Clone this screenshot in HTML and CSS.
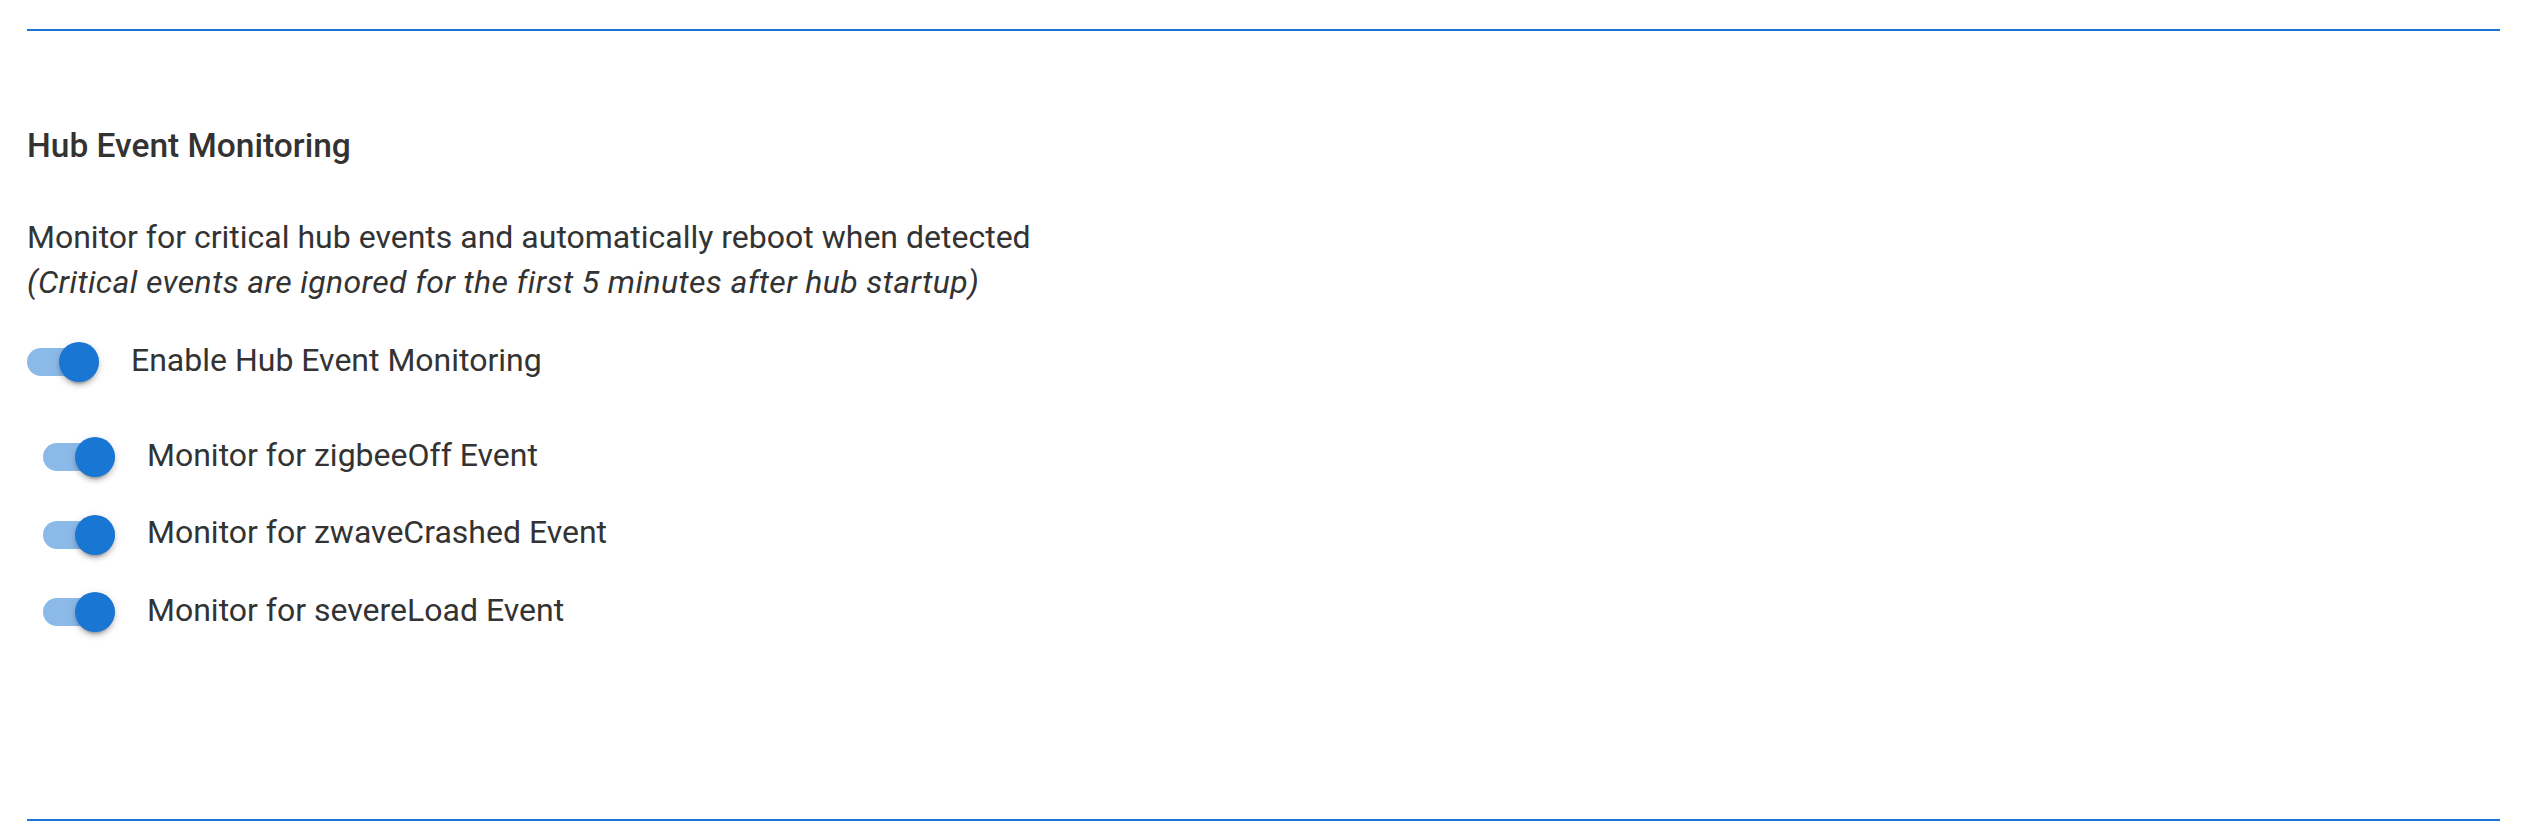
FILE: index.html
```html
<!DOCTYPE html>
<html lang="en">
<head>
<meta charset="utf-8">
<title>Hub Event Monitoring</title>
<link rel="stylesheet" href="styles.css">
</head>
<body>
<div class="page">
  <hr class="rule">
  <section class="section">
    <h3 class="title">Hub Event Monitoring</h3>
    <p class="desc">Monitor for critical hub events and automatically reboot when detected<br><em>(Critical events are ignored for the first 5 minutes after hub startup)</em></p>
    <label class="switch main"><input type="checkbox" checked><span class="lever"></span><span class="text">Enable Hub Event Monitoring</span></label>
    <div class="sub">
      <label class="switch"><input type="checkbox" checked><span class="lever"></span><span class="text">Monitor for zigbeeOff Event</span></label>
      <label class="switch"><input type="checkbox" checked><span class="lever"></span><span class="text">Monitor for zwaveCrashed Event</span></label>
      <label class="switch"><input type="checkbox" checked><span class="lever"></span><span class="text">Monitor for severeLoad Event</span></label>
    </div>
  </section>
  <hr class="rule">
</div>
</body>
</html>
```
FILE: styles.css
```css
html, body {
  margin: 0;
  padding: 0;
  background: #ffffff;
}

body {
  font-family: Roboto, "Noto Sans", "Liberation Sans", sans-serif;
  color: #333333;
}

.page {
  padding: 29px 30px 0 27px;
}

.rule {
  margin: 0;
  border: 0;
  height: 2px;
  background: #1976d2;
}

.section {
  padding-bottom: 189px;
}

.title {
  margin: 89px 0 0;
  font-size: 33.5px;
  font-weight: 500;
  line-height: 51px;
}

.desc {
  margin: 44px 0 0;
  font-size: 32px;
  line-height: 44.8px;
}

.desc em {
  font-style: italic;
  letter-spacing: 0.38px;
}

.switch {
  display: block;
  font-size: 32px;
  line-height: 40px;
  cursor: pointer;
  user-select: none;
}

.switch input {
  display: none;
}

.switch.main {
  margin-top: 35px;
}

.sub {
  margin-top: 55px;
  padding-left: 16px;
  display: flex;
  flex-direction: column;
  gap: 37.5px;
}

.lever {
  position: relative;
  display: inline-block;
  vertical-align: middle;
  width: 72px;
  height: 28px;
  margin-right: 32px;
  border-radius: 30px;
  background: rgba(25, 118, 210, 0.5);
}

.lever::after {
  content: "";
  position: absolute;
  top: -6px;
  left: 32px;
  width: 40px;
  height: 40px;
  border-radius: 50%;
  background: #1976d2;
  box-shadow: 0 6px 2px -4px rgba(0, 0, 0, 0.2), 0 4px 4px 0 rgba(0, 0, 0, 0.14), 0 2px 10px 0 rgba(0, 0, 0, 0.12);
}

.text {
  vertical-align: baseline;
}
```
